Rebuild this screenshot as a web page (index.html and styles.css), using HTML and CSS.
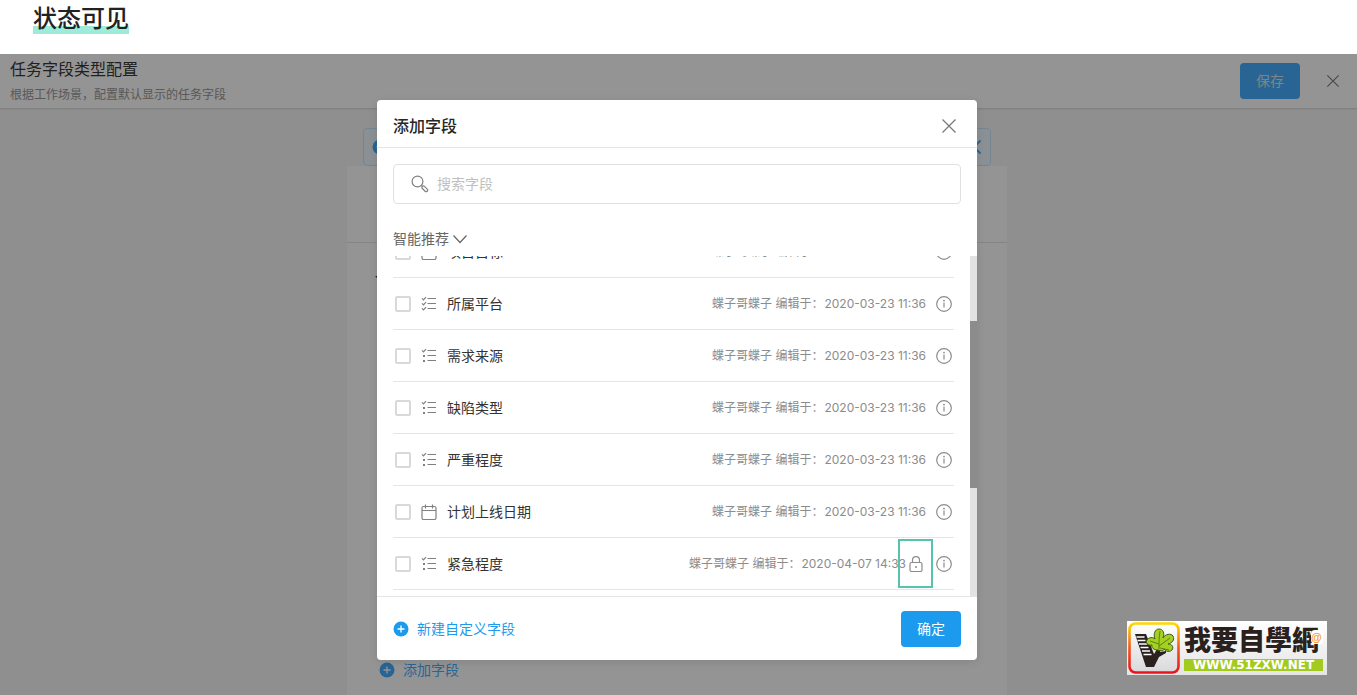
FILE: index.html
```html
<!DOCTYPE html>
<html lang="zh-CN">
<head>
<meta charset="utf-8">
<title>状态可见</title>
<link rel="stylesheet" href="styles.css">
</head>
<body>
<svg class="defs" aria-hidden="true">
  <symbol id="close" viewBox="0 0 16 16"><path d="M1.5 1.5 14.5 14.5M14.5 1.5 1.5 14.5"/></symbol>
  <symbol id="plus" viewBox="0 0 16 16"><circle cx="8" cy="8" r="7.5" fill="currentColor" stroke="none"/><path d="M8 4.5v7M4.500 8h7" stroke="#fff" stroke-width="1.3"/></symbol>
  <symbol id="info" viewBox="0 0 16 16"><circle cx="8" cy="8" r="7.3"/><path d="M8 6.600v5"/><circle cx="8" cy="4.600" r=".9" fill="currentColor" stroke="none"/></symbol>
  <symbol id="checks" viewBox="0 0 16 16"><path d="M1 2.300l1.500 1.500L5 1.100M1 7.300l1.500 1.500L5 6.100M1 12.300l1.500 1.500L5 11.100M6.500 2.500h8.500M6.500 7.500h8.500M6.500 12.500h8.500"/></symbol>
  <symbol id="options" viewBox="0 0 16 16"><path d="M1 2.300l1.500 1.500L5 1.100M6.500 2.500h8.500M6.500 7.500h8.500M6.500 12.500h8.500"/><path d="M2 7h2v2H2zM2 12h2v2H2z" fill="currentColor" stroke="none"/></symbol>
  <symbol id="date" viewBox="0 0 16 16"><rect x="1" y="2.500" width="14" height="13" rx="1.500"/><path d="M1 6.500h14M4.500 .5v4M11.500 .5v4"/></symbol>
  <symbol id="lock" viewBox="0 0 16 16"><rect x="2" y="6.500" width="12" height="9" rx="1.500"/><path d="M4.500 6.500V4.200a3.500 3.500 0 0 1 7 0V6.500"/><circle cx="8" cy="11" r="1" fill="currentColor" stroke="none"/></symbol>
</svg>

<header class="slide-head"><h1 class="slide-title">状态可见</h1></header>

<main class="stage">
  <div class="page">
    <div class="page-head">
      <div class="page-heading">
        <h2 class="page-title">任务字段类型配置</h2>
        <p class="page-note">根据工作场景，配置默认显示的任务字段</p>
      </div>
      <div class="page-actions">
        <button class="btn btn-save" type="button">保存</button>
        <button class="icon-btn" type="button" aria-label="关闭"><svg class="icon icon-s"><use href="#close"/></svg></button>
      </div>
    </div>
    <div class="page-body">
      <div class="tip">
        <svg class="icon"><use href="#plus"/></svg>
        <svg class="icon icon-bold"><use href="#close"/></svg>
      </div>
      <div class="panel">
        <div class="panel-head"></div>
        <div class="panel-body">
          <span class="caret"></span>
          <button class="add-link" type="button"><svg class="icon"><use href="#plus"/></svg>添加字段</button>
        </div>
      </div>
    </div>
  </div>

  <div class="overlay">
    <section class="modal" role="dialog" aria-labelledby="dlg">
      <div class="modal-head">
        <h2 class="modal-title" id="dlg">添加字段</h2>
        <button class="icon-btn" type="button" aria-label="关闭"><svg class="icon"><use href="#close"/></svg></button>
      </div>
      <div class="modal-tools">
        <label class="search">
          <svg class="search-icon" viewBox="0 0 18 18"><circle cx="6.500" cy="6.500" r="5.400"/><path d="M10.400 10.400l1.300 1.300"/><rect x="10.400" y="12.300" width="6.800" height="3" rx="1.500" transform="rotate(45 13.800 13.800)"/></svg>
          <input class="search-input" type="text" placeholder="搜索字段" aria-label="搜索字段">
        </label>
        <button class="group" type="button">智能推荐<svg class="chevron" viewBox="0 0 16 16"><path d="M1.500 4.500 8 11.500 14.500 4.500"/></svg></button>
      </div>
      <div class="list-wrap">
        <ul class="list">
          <li class="row"><label class="field"><input class="check" type="checkbox"><svg class="icon"><use href="#date"/></svg>项目目标</label><span class="meta">蝶子哥蝶子 编辑于：<time>2020-03-23 11:36</time></span><svg class="icon"><use href="#info"/></svg></li>
          <li class="row"><label class="field"><input class="check" type="checkbox"><svg class="icon"><use href="#checks"/></svg>所属平台</label><span class="meta">蝶子哥蝶子 编辑于：<time>2020-03-23 11:36</time></span><svg class="icon"><use href="#info"/></svg></li>
          <li class="row"><label class="field"><input class="check" type="checkbox"><svg class="icon"><use href="#options"/></svg>需求来源</label><span class="meta">蝶子哥蝶子 编辑于：<time>2020-03-23 11:36</time></span><svg class="icon"><use href="#info"/></svg></li>
          <li class="row"><label class="field"><input class="check" type="checkbox"><svg class="icon"><use href="#options"/></svg>缺陷类型</label><span class="meta">蝶子哥蝶子 编辑于：<time>2020-03-23 11:36</time></span><svg class="icon"><use href="#info"/></svg></li>
          <li class="row"><label class="field"><input class="check" type="checkbox"><svg class="icon"><use href="#options"/></svg>严重程度</label><span class="meta">蝶子哥蝶子 编辑于：<time>2020-03-23 11:36</time></span><svg class="icon"><use href="#info"/></svg></li>
          <li class="row"><label class="field"><input class="check" type="checkbox"><svg class="icon"><use href="#date"/></svg>计划上线日期</label><span class="meta">蝶子哥蝶子 编辑于：<time>2020-03-23 11:36</time></span><svg class="icon"><use href="#info"/></svg></li>
          <li class="row"><label class="field"><input class="check" type="checkbox"><svg class="icon"><use href="#options"/></svg>紧急程度</label><span class="meta meta-locked">蝶子哥蝶子 编辑于：<time>2020-04-07 14:33</time></span><span class="lock"><svg class="icon"><use href="#lock"/></svg><span class="mark"></span></span><svg class="icon"><use href="#info"/></svg></li>
        </ul>
        <div class="track"><div class="thumb"></div></div>
      </div>
      <div class="modal-foot">
        <button class="new-link" type="button"><svg class="icon"><use href="#plus"/></svg>新建自定义字段</button>
        <button class="btn btn-ok" type="button">确定</button>
      </div>
    </section>
  </div>

  <aside class="brand">
    <svg class="brand-logo" viewBox="0 0 52 52">
      <defs>
        <linearGradient id="rim" x1="0" y1="0" x2="0" y2="1"><stop offset="0" stop-color="#ffd800"/><stop offset=".5" stop-color="#f5551c"/><stop offset="1" stop-color="#e8141c"/></linearGradient>
        <linearGradient id="face" x1="0" y1="0" x2="0" y2="1"><stop offset="0" stop-color="#fff"/><stop offset="1" stop-color="#d9d9dc"/></linearGradient>
      </defs>
      <rect x="1.500" y="1.500" width="49" height="49" rx="6" fill="url(#face)" stroke="url(#rim)" stroke-width="2.600"/>
      <path d="M7 12h11l8 20c2-3 3-5 3-8l4 2c0 2-1 3-1 4l6-1v2l-7 4-5 10h-8z" fill="#2a211e"/>
      <path d="M8.500 15h8M9.500 18.500h8M11 22h8M12.500 25.500h8M14 29h8M15.500 32.500h8" stroke="#fff" stroke-width="1.500"/>
      <path d="M30 28c-4 0-7-2-6-5-4 1-7-2-5-5 2-3 6-3 8-1-2-5 0-10 4-10s6 4 4 9c2-4 8-5 10-2 2 4-1 7-5 8 4 0 6 3 4 6-2 2-6 2-8-1 0 2-3 2-6 1z" fill="#a5d01f" stroke="#3f5c18" stroke-width="1"/>
      <path d="M31 27c0-7 0-12 1-18M31 24l11-8M31 22l-9-3M32 26l9 2" stroke="#4f7a1a" stroke-width=".9"/>
    </svg>
    <div class="brand-text">
      <div class="brand-name">我要自學網</div>
      <div class="brand-url">WWW.51ZXW.NET</div>
      <span class="brand-dot">@</span>
    </div>
  </aside>
</main>
</body>
</html>
```
FILE: styles.css
```css
* { box-sizing: border-box; }
body, h1, h2, p, ul { margin: 0; padding: 0; }
body {
  min-height: 100vh;
  display: flex;
  flex-direction: column;
  background: #fff;
  color: #333;
  font-family: Inter, "Noto Sans CJK SC", sans-serif;
  font-size: 14px;
}
button {
  padding: 0;
  border: 0;
  background: none;
  font: inherit;
  color: inherit;
}
.defs { position: absolute; width: 0; height: 0; }
.icon, .search-icon, .chevron {
  flex: none;
  width: 16px;
  height: 16px;
  fill: none;
  stroke: currentColor;
  stroke-width: 1.2;
}
.icon-s { width: 14px; height: 14px; }
.icon-bold { stroke-width: 2; }
.icon-btn { display: flex; color: #777; }

.slide-head { height: 54px; padding: 2px 33px; }
.slide-title {
  display: inline-block;
  height: 32px;
  line-height: 34px;
  font-size: 24px;
  font-weight: 500;
  color: #222;
  background: linear-gradient(#9debd8, #9debd8) bottom / 100% 8px no-repeat;
}

.stage {
  position: relative;
  flex: 1;
  display: flex;
  overflow: hidden;
}
.page { flex: 1; display: flex; flex-direction: column; background: #f7f7f7; }
.page-head {
  display: flex;
  justify-content: space-between;
  height: 54px;
  padding: 0 17px 0 10px;
  background: #fff;
  box-shadow: 0 1px 2px rgba(0, 0, 0, .15);
}
.page-heading { padding-top: 3px; }
.page-title { font-size: 16px; font-weight: 400; line-height: 24px; color: #383838; }
.page-note { font-size: 12px; line-height: 28px; color: #999; }
.page-actions { display: flex; align-items: center; gap: 26px; }
.btn {
  width: 60px;
  height: 36px;
  padding-bottom: 2px;
  border-radius: 4px;
  color: #fff;
}
.btn-save { background: #46afff; color: #e0e0e0; }
.page-body {
  flex: 1;
  display: flex;
  flex-direction: column;
  align-items: center;
  padding: 20px 3px 0 0;
}
.tip {
  display: flex;
  align-items: center;
  justify-content: space-between;
  width: 628px;
  height: 38px;
  padding: 0 8px;
  border: 1px solid #c8e6fa;
  border-radius: 4px;
  background: #f0f9ff;
  color: #46afff;
}
.panel {
  flex: 1;
  display: flex;
  flex-direction: column;
  width: 660px;
  background: #fff;
}
.panel-head { height: 77px; border-bottom: 1px solid #e5e5e5; }
.panel-body {
  flex: 1;
  display: flex;
  flex-direction: column;
  justify-content: space-between;
  align-items: flex-start;
  padding: 33px 32px 14px 28px;
}
.caret { border: 4px solid transparent; border-top-color: #333; }
.add-link, .new-link { display: flex; align-items: center; gap: 8px; line-height: 22px; }
.add-link { margin-left: 4px; color: #46afff; }

.overlay {
  position: absolute;
  inset: 0;
  display: flex;
  justify-content: center;
  align-items: flex-start;
  padding: 46px 3px 0 0;
  background: rgba(0, 0, 0, .42);
}
.modal {
  display: flex;
  flex-direction: column;
  width: 600px;
  border-radius: 4px;
  overflow: hidden;
  background: #fff;
  box-shadow: 0 2px 8px rgba(0, 0, 0, .1);
}
.modal-head {
  display: flex;
  align-items: center;
  justify-content: space-between;
  height: 48px;
  padding: 4px 20px 0 16px;
  border-bottom: 1px solid #e5e5e5;
}
.modal-title { font-size: 16px; font-weight: 500; line-height: 24px; color: #262626; }
.modal-tools { padding: 16px 16px 6px; }
.search {
  display: flex;
  align-items: center;
  gap: 8px;
  height: 40px;
  padding: 0 17px;
  border: 1px solid #e0e0e0;
  border-radius: 4px;
  color: #808080;
}
.search-icon { width: 18px; height: 18px; }
.search-input {
  flex: 1;
  border: 0;
  padding: 0 0 2px;
  outline: 0;
  background: none;
  font: inherit;
}
.search-input::placeholder { color: #bfbfbf; }
.group {
  display: flex;
  align-items: center;
  gap: 3px;
  margin-top: 24px;
  line-height: 22px;
  color: #666;
}
.list-wrap { display: flex; height: 340px; overflow: hidden; }
.list {
  flex: 1;
  display: flex;
  flex-direction: column;
  justify-content: flex-end;
  padding: 0 16px 6px;
  list-style: none;
}
.row {
  flex: none;
  display: flex;
  align-items: center;
  gap: 10px;
  height: 52px;
  padding: 0 2px;
  border-bottom: 1px solid #e5e5e5;
  color: #8c8c8c;
}
.field { flex: 1; display: flex; align-items: center; gap: 10px; line-height: 20px; color: #333; }
.field .icon { color: #808080; }
.check {
  appearance: none;
  width: 16px;
  height: 16px;
  margin: 0;
  border: 2px solid #d9d9d9;
  border-radius: 2px;
}
.meta { font-size: 12px; line-height: 20px; }
.meta time { margin-left: 1px; }
.meta-locked { margin-right: -8px; }
.lock { position: relative; display: flex; margin-right: 2px; }
.mark {
  position: absolute;
  inset: -17px -9px -16px -10px;
  border: 2px solid #56c4ab;
}
.track { width: 7px; background: #e2e2e2; }
.thumb { height: 167px; margin-top: 65px; background: #8c8c8c; }
.modal-foot {
  display: flex;
  align-items: center;
  justify-content: space-between;
  height: 64px;
  padding: 0 16px;
  border-top: 1px solid #e5e5e5;
}
.new-link { color: #1b9aee; }
.btn-ok { background: #1b9aee; }

.brand {
  position: absolute;
  right: 30px;
  bottom: 20px;
  display: flex;
  align-items: center;
  gap: 4px;
  width: 200px;
  height: 54px;
  padding: 0 4px 0 1px;
  background: linear-gradient(#fff, #e4e4e6);
}
.brand-logo { width: 52px; height: 52px; flex: none; fill: none; }
.brand-text { position: relative; flex: 1; }
.brand-name {
  padding-bottom: 6px;
  font: 900 27px/28px "Noto Sans CJK TC", sans-serif;
  color: #2a211e;
  white-space: nowrap;
}
.brand-url {
  height: 12px;
  background: #a3cb1f;
  color: #fff;
  font: bold 12px/12px "DejaVu Sans", sans-serif;
  text-align: center;
}
.brand-dot {
  position: absolute;
  right: 0;
  top: 5px;
  width: 12px;
  height: 14px;
  border-radius: 4px;
  background: #fff;
  color: #f7941d;
  font: bold 11px/14px "Liberation Sans", sans-serif;
}
```
